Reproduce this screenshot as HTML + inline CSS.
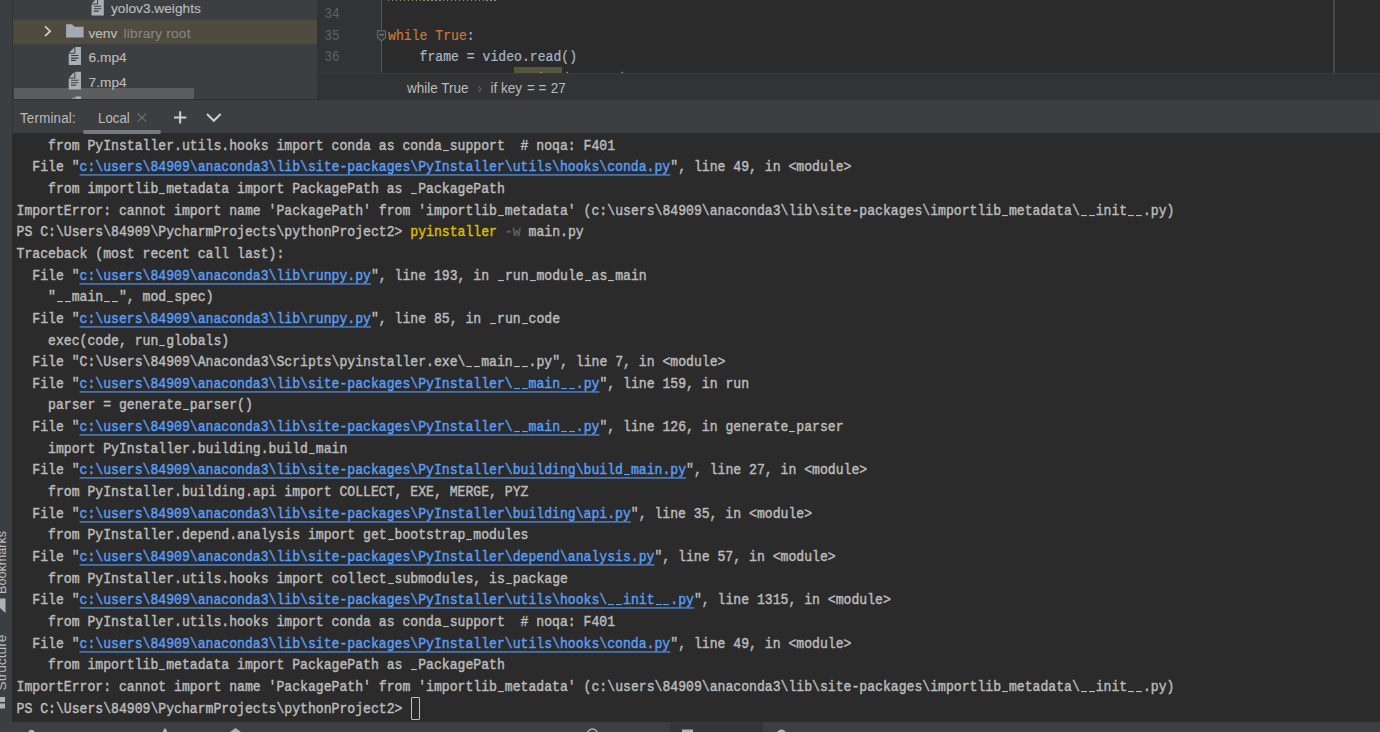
<!DOCTYPE html>
<html><head><meta charset="utf-8">
<style>
html,body{margin:0;padding:0}
body{width:1380px;height:732px;overflow:hidden;position:relative;background:#2B2B2B;font-family:"Liberation Sans",sans-serif;}
.abs{position:absolute}
#strip{left:0;top:0;width:12px;height:722px;background:#3C3F41}
#stripline{left:12px;top:0;width:1px;height:134px;background:#323232}
#proj{left:13px;top:0;width:304px;height:100px;background:#3C3F41;overflow:hidden}
#projsel{left:0;top:20px;width:304px;height:24px;background:#4F4B3E}
.tree{position:absolute;font-size:13.7px;color:#BBBBBB;white-space:pre;line-height:16px;-webkit-text-stroke:0.15px currentColor}
#scrollh{left:1px;top:88px;width:180px;height:11px;background:#5C5D5F}
#pdiv{left:317px;top:0;width:1px;height:100px;background:#323232}
#gutter{left:318px;top:0;width:63px;height:73px;background:#313335}
#foldline{left:381px;top:0;width:1px;height:73px;background:#555555}
#editor{left:382px;top:0;width:998px;height:73px;background:#2B2B2B;overflow:hidden}
#margin{left:1333px;top:0;width:2px;height:73px;background:#464646}
.ln{position:absolute;left:324.5px;font-family:"Liberation Mono",monospace;font-size:12.5px;color:#606366;line-height:16px;transform-origin:0 12.5px;transform:scaleY(1.12)}
.code{position:absolute;font-family:"Liberation Mono",monospace;font-size:13.13px;color:#A9B7C6;white-space:pre;line-height:16px;transform-origin:0 12.5px;transform:scaleY(1.14);-webkit-text-stroke:0.2px currentColor}
.kw{color:#CC7832}
#crumbs{left:318px;top:73px;width:1062px;height:27px;background:#313335;border-top:1px solid #393B3D;box-sizing:border-box}
.crumb{position:absolute;top:6.8px;font-size:13.5px;color:#BBBBBB;white-space:pre;line-height:16px;transform-origin:0 12.5px;transform:scaleY(1.12)}
#twhead{left:13px;top:100px;width:1367px;height:33px;background:#3C3F41}
.tw{position:absolute;font-size:13.3px;color:#BBBBBB;white-space:pre;line-height:16px;transform-origin:0 13px;transform:scaleY(1.1)}
#tabul{left:70px;top:130px;width:78px;height:4px;background:#747A80;border-radius:2px}
#term{left:13px;top:133px;width:1367px;height:589px;background:#2B2B2B;overflow:hidden}
#tt{position:absolute;left:3.5px;top:2.6px;font-family:"Liberation Mono",monospace;font-size:13.13px;line-height:21.67px;color:#BBBBBB}
.l{height:21.67px;white-space:pre;transform-origin:0 14.3px;transform:scaleY(1.14);-webkit-text-stroke:0.4px currentColor}
.a{color:#589DF6;text-decoration:underline;text-decoration-color:#589DF6;text-decoration-skip-ink:none;text-underline-offset:3.1px;text-decoration-thickness:1.4px}
.u{color:transparent;-webkit-text-stroke:0;background:linear-gradient(#BBBBBB,#BBBBBB) no-repeat 1px 10.8px/5.9px 1.4px}
.a .u{background-image:linear-gradient(#589DF6,#589DF6)}
.y{color:#DDBB00}
.g{color:#606060}
#cur{left:411px;top:697px;width:9px;height:23px;box-sizing:border-box;border:1.5px solid #C4C4C4;border-radius:1px}
#bottom{left:0;top:722px;width:1380px;height:10px;background:#3C3F41}
</style></head><body>
<div id="strip" class="abs"></div>
<div id="stripline" class="abs"></div>
<div id="proj" class="abs">
  <div id="projsel" class="abs"></div>
  <div id="scrollh" class="abs"></div>
  <svg class="abs" style="left:0;top:0" width="304" height="100" viewBox="13 0 304 100">
    <defs>
      <g id="fic">
        <path d="M6.6 0H12.3V17.8H0V6.6H6.6Z" fill="#A9B0B5"/>
        <path d="M5.6 0.3V5.6H0.3Z" fill="#A9B0B5"/>
        <path d="M2.5 8.4H9.8M2.3 11H9.8M2.3 13.3H7.3" stroke="#3C3F41" stroke-width="1.1"/>
      </g>
    </defs>
    <use href="#fic" x="91.5" y="-2.2"/>
    <use href="#fic" x="68.7" y="47.1"/>
    <use href="#fic" x="68.7" y="71.8"/>
    <use href="#fic" x="68.7" y="96.5"/>
    <path d="M45 26.3L50.2 31.2L45 36.1" fill="none" stroke="#D4D4D4" stroke-width="1.6"/>
    <path d="M66.1 24.2H72L74.6 26.7H83.6V37.6H66.1Z" fill="#A2ABB2"/>
  </svg>
  <div class="tree" style="left:98px;top:1px">yolov3.weights</div>
  <div class="tree" style="left:75.4px;top:25.8px">venv <span style="color:#858585;margin-left:2.5px;letter-spacing:0.2px">library root</span></div>
  <div class="tree" style="left:75.6px;top:49.6px">6.mp4</div>
  <div class="tree" style="left:75.6px;top:74.6px">7.mp4</div>
</div>
<div id="pdiv" class="abs"></div>
<div id="gutter" class="abs"></div>
<div id="foldline" class="abs"></div>
<div id="editor" class="abs"></div>
<div id="margin" class="abs"></div>
<div class="ln" style="top:7px">34</div>
<div class="ln" style="top:28.6px">35</div>
<div class="ln" style="top:50.3px">36</div>
<div class="abs" style="left:387.8px;top:0;width:109px;height:1px;background:repeating-linear-gradient(90deg,#8E8E70 0 1.3px,transparent 1.3px 3.94px)"></div>
<div class="abs" style="left:514px;top:67px;width:48px;height:6px;background:#57543F"></div>
<svg class="abs" style="left:530px;top:70px" width="100" height="3" viewBox="530 70 100 3"><rect x="540.5" y="71.8" width="1.6" height="1.2" fill="#8AA0B8"/><rect x="566.5" y="71.8" width="1.6" height="1.2" fill="#8AA0B8"/><rect x="621.5" y="71.8" width="1.6" height="1.2" fill="#8AA0B8"/></svg>
<svg class="abs" style="left:376px;top:29px" width="12" height="14" viewBox="376 29 12 14"><path d="M377.5 30.7H385.5V37.4L381.5 41L377.5 37.4Z" fill="#313335" stroke="#6A6A6A" stroke-width="1.1"/><path d="M379.3 34.8H383.7" stroke="#8A8A8A" stroke-width="1.2"/></svg>
<div class="code" style="left:388px;top:28.6px"><span class="kw">while True</span>:</div>
<div class="code" style="left:388px;top:50.3px">    frame = video.read()</div>
<div id="crumbs" class="abs">
  <div class="crumb" style="left:89px">while True</div>
  <div class="crumb" style="left:159.5px;color:#6E6E6E">›</div>
  <div class="crumb" style="left:172.5px">if key</div>
  <div class="crumb" style="left:209px">=</div>
  <div class="crumb" style="left:220.4px">=</div>
  <div class="crumb" style="left:232.8px">27</div>
</div>
<div class="abs" style="left:13px;top:99px;width:1367px;height:1px;background:#2F3031;z-index:2"></div>
<div id="twhead" class="abs">
  <div class="tw" style="left:7px;top:10.5px;letter-spacing:0.22px">Terminal:</div>
  <div class="tw" style="left:85px;top:10.5px">Local</div>
  <svg class="abs" style="left:0;top:0" width="260" height="34" viewBox="13 100 260 34">
    <path d="M137.5 113.5L146.3 121.8M146.3 113.5L137.5 121.8" stroke="#6E6E6E" stroke-width="1.1"/>
    <path d="M174 117.4H186.3M180.15 111.3V123.5" stroke="#CFCFCF" stroke-width="2"/>
    <path d="M207 114L213.8 120.8L220.6 114" fill="none" stroke="#CFCFCF" stroke-width="2"/>
  </svg>
</div>
<div id="term" class="abs">
<div id="tt">
<div class="l">    from PyInstaller.utils.hooks import conda as conda<span class="u">_</span>support  # noqa: F401</div>
<div class="l">  File "<span class="a">c:\users\84909\anaconda3\lib\site-packages\PyInstaller\utils\hooks\conda.py</span>", line 49, in &lt;module&gt;</div>
<div class="l">    from importlib<span class="u">_</span>metadata import PackagePath as <span class="u">_</span>PackagePath</div>
<div class="l">ImportError: cannot import name 'PackagePath' from 'importlib<span class="u">_</span>metadata' (c:\users\84909\anaconda3\lib\site-packages\importlib<span class="u">_</span>metadata\<span class="u">_</span><span class="u">_</span>init<span class="u">_</span><span class="u">_</span>.py)</div>
<div class="l">PS C:\Users\84909\PycharmProjects\pythonProject2&gt; <span class="y">pyinstaller</span> <span class="g">-w</span> main.py</div>
<div class="l">Traceback (most recent call last):</div>
<div class="l">  File "<span class="a">c:\users\84909\anaconda3\lib\runpy.py</span>", line 193, in <span class="u">_</span>run<span class="u">_</span>module<span class="u">_</span>as<span class="u">_</span>main</div>
<div class="l">    "<span class="u">_</span><span class="u">_</span>main<span class="u">_</span><span class="u">_</span>", mod<span class="u">_</span>spec)</div>
<div class="l">  File "<span class="a">c:\users\84909\anaconda3\lib\runpy.py</span>", line 85, in <span class="u">_</span>run<span class="u">_</span>code</div>
<div class="l">    exec(code, run<span class="u">_</span>globals)</div>
<div class="l">  File "C:\Users\84909\Anaconda3\Scripts\pyinstaller.exe\<span class="u">_</span><span class="u">_</span>main<span class="u">_</span><span class="u">_</span>.py", line 7, in &lt;module&gt;</div>
<div class="l">  File "<span class="a">c:\users\84909\anaconda3\lib\site-packages\PyInstaller\<span class="u">_</span><span class="u">_</span>main<span class="u">_</span><span class="u">_</span>.py</span>", line 159, in run</div>
<div class="l">    parser = generate<span class="u">_</span>parser()</div>
<div class="l">  File "<span class="a">c:\users\84909\anaconda3\lib\site-packages\PyInstaller\<span class="u">_</span><span class="u">_</span>main<span class="u">_</span><span class="u">_</span>.py</span>", line 126, in generate<span class="u">_</span>parser</div>
<div class="l">    import PyInstaller.building.build<span class="u">_</span>main</div>
<div class="l">  File "<span class="a">c:\users\84909\anaconda3\lib\site-packages\PyInstaller\building\build<span class="u">_</span>main.py</span>", line 27, in &lt;module&gt;</div>
<div class="l">    from PyInstaller.building.api import COLLECT, EXE, MERGE, PYZ</div>
<div class="l">  File "<span class="a">c:\users\84909\anaconda3\lib\site-packages\PyInstaller\building\api.py</span>", line 35, in &lt;module&gt;</div>
<div class="l">    from PyInstaller.depend.analysis import get<span class="u">_</span>bootstrap<span class="u">_</span>modules</div>
<div class="l">  File "<span class="a">c:\users\84909\anaconda3\lib\site-packages\PyInstaller\depend\analysis.py</span>", line 57, in &lt;module&gt;</div>
<div class="l">    from PyInstaller.utils.hooks import collect<span class="u">_</span>submodules, is<span class="u">_</span>package</div>
<div class="l">  File "<span class="a">c:\users\84909\anaconda3\lib\site-packages\PyInstaller\utils\hooks\<span class="u">_</span><span class="u">_</span>init<span class="u">_</span><span class="u">_</span>.py</span>", line 1315, in &lt;module&gt;</div>
<div class="l">    from PyInstaller.utils.hooks import conda as conda<span class="u">_</span>support  # noqa: F401</div>
<div class="l">  File "<span class="a">c:\users\84909\anaconda3\lib\site-packages\PyInstaller\utils\hooks\conda.py</span>", line 49, in &lt;module&gt;</div>
<div class="l">    from importlib<span class="u">_</span>metadata import PackagePath as <span class="u">_</span>PackagePath</div>
<div class="l">ImportError: cannot import name 'PackagePath' from 'importlib<span class="u">_</span>metadata' (c:\users\84909\anaconda3\lib\site-packages\importlib<span class="u">_</span>metadata\<span class="u">_</span><span class="u">_</span>init<span class="u">_</span><span class="u">_</span>.py)</div>
<div class="l">PS C:\Users\84909\PycharmProjects\pythonProject2&gt; </div>
</div>
</div>
<div id="cur" class="abs"></div>
<div id="tabul" class="abs" style="left:83px"></div>
<div id="bottom" class="abs">
  <div class="abs" style="left:670px;top:0;width:93px;height:10px;background:#333537"></div>
  <svg class="abs" style="left:0;top:0" width="1380" height="10" viewBox="0 722 1380 10">
    <circle cx="31.5" cy="733" r="3.2" fill="#AFB1B3"/>
    <path d="M163 730.5L165 728L167 730.5V732H163Z" fill="#AFB1B3"/>
    <path d="M230 732L235.5 728L241 732Z" fill="#AFB1B3"/>
    <circle cx="592.5" cy="734" r="5" fill="none" stroke="#AFB1B3" stroke-width="1.4"/>
    <rect x="682" y="729.5" width="11" height="3" fill="#AFB1B3"/>
    <circle cx="781.5" cy="734" r="4.5" fill="#AFB1B3"/>
  </svg>
</div>
<svg class="abs" style="left:0;top:520px" width="12" height="200" viewBox="0 520 12 200">
  <text transform="translate(5.6,594) rotate(-90)" font-family="Liberation Sans" font-size="13.5" textLength="63" lengthAdjust="spacingAndGlyphs" fill="#BBBBBB">Bookmarks</text>
  <path d="M0 598.5H5.5V613L0 608Z" fill="#AFB1B3"/>
  <text transform="translate(5.6,690.5) rotate(-90)" font-family="Liberation Sans" font-size="13.5" textLength="56" lengthAdjust="spacingAndGlyphs" fill="#BBBBBB">Structure</text>
  <rect x="0" y="697" width="5" height="5" fill="#AFB1B3"/>
  <rect x="0" y="703.5" width="5" height="5" fill="#AFB1B3"/>
</svg>
</body></html>
